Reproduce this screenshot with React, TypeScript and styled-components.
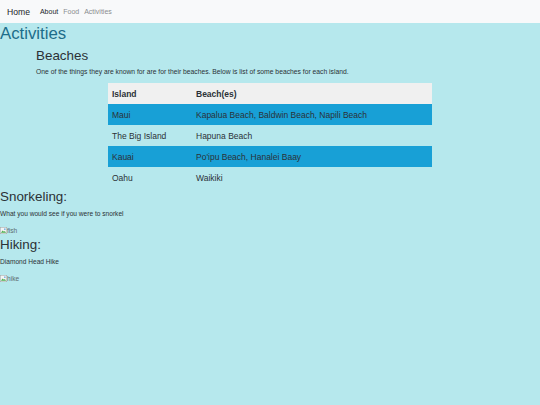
import styled, { createGlobalStyle } from "styled-components"

const GlobalStyle = createGlobalStyle`
  html, body {
    margin: 0;
    padding: 0;
    background: #b6e8ed;
    font-family: "Liberation Sans", Arial, Helvetica, sans-serif;
    color: #212529;
  }
`

const beaches = [
  { island: "Maui", list: "Kapalua Beach, Baldwin Beach, Napili Beach", striped: true },
  { island: "The Big Island", list: "Hapuna Beach", striped: false },
  { island: "Kauai", list: "Po'ipu Beach, Hanalei Baay", striped: true },
  { island: "Oahu", list: "Waikiki", striped: false },
]

function BrokenImage({ alt }: { alt: string }) {
  return (
    <Broken>
      <svg width="7" height="7" viewBox="0 0 16 16">
        <rect x="0.5" y="0.5" width="15" height="15" fill="#f4f4f4" stroke="#9a9a9a" />
        <path d="M2 13 L6 8 L9 11 L11 9 L14 13 Z" fill="#4caf50" />
        <circle cx="11" cy="5" r="2" fill="#7ab8e8" />
      </svg>
      {alt}
    </Broken>
  )
}

export default function App() {
  return (
    <>
      <GlobalStyle />
      <Nav>
        <Brand>Home</Brand>
        <NavLink $active>About</NavLink>
        <NavLink>Food</NavLink>
        <NavLink>Activities</NavLink>
      </Nav>
      <Main>
        <Title>Activities</Title>
        <Section>
          <SubTitle>Beaches</SubTitle>
          <Text>
            One of the things they are known for are for their beaches. Below is list of some beaches for each island.
          </Text>
          <Table>
            <thead>
              <tr>
                <Th>Island</Th>
                <Th>Beach(es)</Th>
              </tr>
            </thead>
            <tbody>
              {beaches.map((b) => (
                <Row key={b.island} $striped={b.striped}>
                  <Td>{b.island}</Td>
                  <Td>{b.list}</Td>
                </Row>
              ))}
            </tbody>
          </Table>
        </Section>
        <Heading>Snorkeling:</Heading>
        <SmallText>What you would see if you were to snorkel</SmallText>
        <BrokenImage alt="fish" />
        <Heading>Hiking:</Heading>
        <SmallText>Diamond Head Hike</SmallText>
        <BrokenImage alt="hike" />
      </Main>
    </>
  )
}

const Nav = styled.nav`
  height: 23px;
  background: #f8f9fa;
  display: flex;
  align-items: center;
  padding: 0 7px;
  box-sizing: border-box;
`

const Brand = styled.span`
  font-size: 8.6px;
  color: #212529;
  margin-right: 10px;
`

const NavLink = styled.span<{ $active?: boolean }>`
  font-size: 7px;
  color: ${(p) => (p.$active ? "#212529" : "#8a8d90")};
  margin-right: 5px;
`

const Main = styled.main`
  display: flex;
  flex-direction: column;
  align-items: flex-start;
`

const Title = styled.h1`
  margin: 1px 0 0;
  font-size: 16.8px;
  font-weight: 400;
  line-height: 1.2;
  color: #1d6d8a;
`

const Section = styled.section`
  padding-left: 36px;
  align-self: stretch;
`

const SubTitle = styled.h2`
  margin: 4px 0 3px;
  font-size: 13.4px;
  font-weight: 400;
  line-height: 1.2;
  color: #2b3136;
`

const Text = styled.p`
  margin: 0 0 6px;
  font-size: 6.75px;
  line-height: 1.5;
  color: #2b3136;
`

const Table = styled.table`
  margin-left: 72px;
  width: 324px;
  border-collapse: collapse;
  font-size: 8.5px;
  color: #2b3136;
`

const Th = styled.th`
  text-align: left;
  font-weight: 700;
  background: #f0f0f0;
  height: 21px;
  padding: 0 4px;
  box-sizing: border-box;
  &:first-child {
    width: 84px;
  }
`

const Row = styled.tr<{ $striped: boolean }>`
  background: ${(p) => (p.$striped ? "#18a0d6" : "transparent")};
`

const Td = styled.td`
  height: 21px;
  padding: 0 4px;
  box-sizing: border-box;
`

const Heading = styled.h3`
  margin: 1px 0 0;
  font-size: 13.4px;
  font-weight: 400;
  line-height: 1.2;
  color: #2b3136;
`

const SmallText = styled.p`
  margin: 4px 0 8px;
  font-size: 6.6px;
  line-height: 1.5;
  color: #2b3136;
`

const Broken = styled.span`
  display: inline-flex;
  align-items: center;
  font-size: 6.6px;
  color: #5d6a70;
  line-height: 1;
  margin-bottom: 2px;
`
